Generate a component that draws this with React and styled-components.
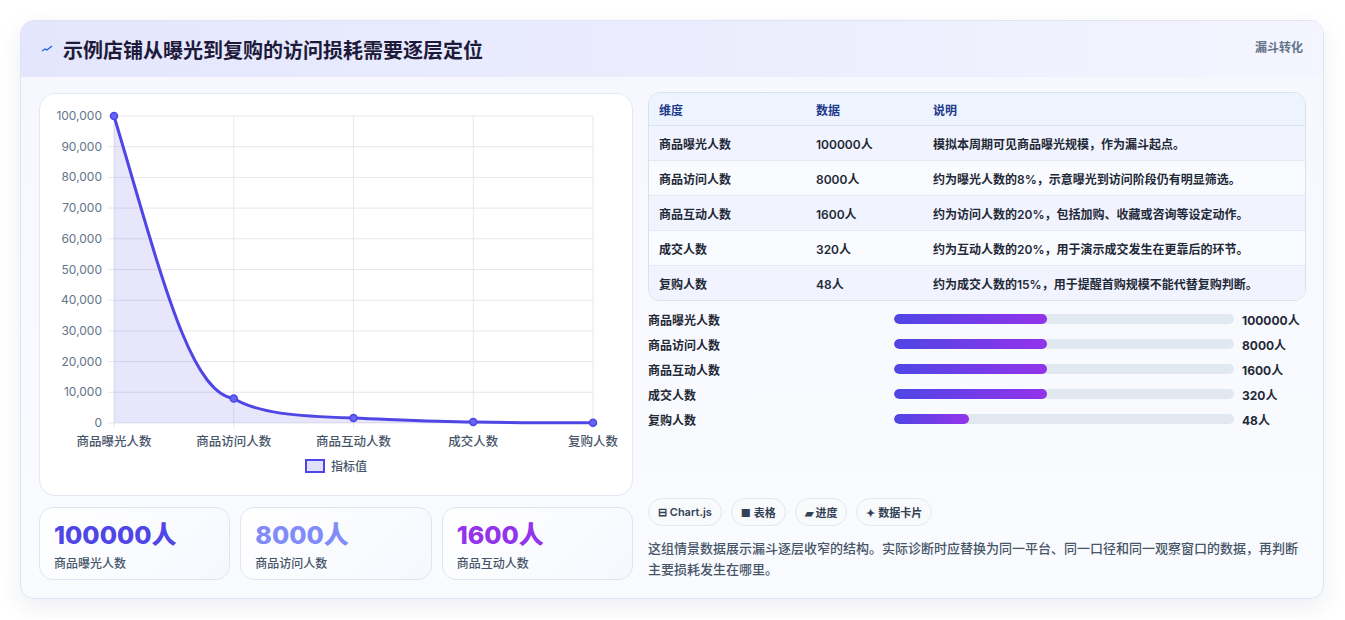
import React from "react";
import styled, { createGlobalStyle } from "styled-components";

const Global = createGlobalStyle`
  html, body { margin: 0; background: #fff; }
  body { font-family: Inter, "Noto Sans CJK SC", sans-serif; }
`;

const Page = styled.div`
  padding: 20px 21px 20px 20px;
`;
const Card = styled.div`
  width: 1304px;
  height: 579px;
  box-sizing: border-box;
  border: 1px solid #dfe3f5;
  border-radius: 14px;
  background: linear-gradient(180deg, #f7f8ff 0%, #fafbfe 100%);
  box-shadow: 0 8px 24px rgba(30, 41, 89, 0.08);
  overflow: hidden;
`;
const Header = styled.div`
  height: 56px;
  display: flex;
  align-items: center;
  justify-content: space-between;
  padding: 0 20px 0 20px;
  background: linear-gradient(90deg, #e4e6fd 0%, #eceefe 60%, #f5f5ff 100%);
`;
const Title = styled.h1`
  margin: 0;
  font-size: 20px;
  font-weight: 700;
  color: #1e1b3a;
  display: flex;
  align-items: center;
  gap: 10px;
`;
const Tag = styled.span`
  font-size: 12px;
  font-weight: 600;
  color: #64748b;
  align-self: flex-start;
  margin-top: 17px;
`;
const Body = styled.div`
  display: grid;
  grid-template-columns: 594px 658px;
  gap: 15px;
  padding: 16px 18px 0 18px;
`;
const Col = styled.div`
  display: flex;
  flex-direction: column;
`;
const ChartCard = styled.div`
  height: 403px;
  box-sizing: border-box;
  background: #fff;
  border: 1px solid #e3e8f2;
  border-radius: 16px;
`;
const Kpis = styled.div`
  display: grid;
  grid-template-columns: repeat(3, 1fr);
  gap: 10px;
  margin-top: 11px;
`;
const Kpi = styled.div`
  height: 73px;
  box-sizing: border-box;
  border: 1px solid #dde6f3;
  border-radius: 14px;
  background: linear-gradient(135deg, #fff 0%, #f6f8fe 100%);
  padding: 10px 14px;
`;
const KpiVal = styled.div`
  font-size: 25px;
  font-weight: 800;
  color: ${p => p.c};
  line-height: 34px;
`;
const KpiLabel = styled.div`
  font-size: 12px;
  color: #475569;
  font-weight: 500;
  margin-top: 2px;
`;
const Table = styled.table`
  width: 100%;
  border-collapse: separate;
  border-spacing: 0;
  border: 1px solid #d9e1ee;
  border-radius: 12px;
  overflow: hidden;
  font-size: 12px;
  font-weight: 600;
  color: #1f2937;
`;
const Th = styled.th`
  text-align: left;
  height: 32px;
  padding: 0 10px;
  background: #eef4ff;
  color: #1e3a8a;
  border-bottom: 1px solid #d9e1ee;
  width: ${p => p.w || "auto"};
`;
const Td = styled.td`
  height: 34px;
  padding: 0 10px;
  background: ${p => (p.alt ? "#f9fbff" : "#f1f4fe")};
  border-bottom: ${p => (p.last ? "none" : "1px solid #e3e8f2")};
`;
const Bars = styled.div`
  display: flex;
  flex-direction: column;
  gap: 7px;
  margin-top: 9px;
`;
const BarRow = styled.div`
  display: grid;
  grid-template-columns: 246px 340px 1fr;
  align-items: center;
  height: 18px;
  font-size: 12px;
  font-weight: 600;
  color: #1f2937;
`;
const Track = styled.div`
  height: 10px;
  border-radius: 5px;
  background: #e2e8f0;
  overflow: hidden;
`;
const Fill = styled.div`
  height: 100%;
  border-radius: 5px;
  background: linear-gradient(90deg, #4f46e5, #9333ea);
`;
const Val = styled.span`
  padding-left: 8px;
  font-weight: 700;
`;
const Chips = styled.div`
  display: flex;
  gap: 9px;
  margin-top: auto;
`;
const Chip = styled.span`
  height: 28px;
  box-sizing: border-box;
  padding: 0 9px;
  border: 1px solid #e2e8f0;
  border-radius: 14px;
  background: #f8fafc;
  display: flex;
  align-items: center;
  gap: 3px;
  font-size: 11px;
  font-weight: 600;
  color: #334155;
`;
const Para = styled.p`
  margin: 12px 0 0;
  font-size: 13px;
  line-height: 21px;
  font-weight: 500;
  color: #475569;
`;
const RightCol = styled(Col)`
  height: 488px;
  margin-top: -1px;
`;

const rows = [
  ["商品曝光人数", "100000人", "模拟本周期可见商品曝光规模，作为漏斗起点。", 45],
  ["商品访问人数", "8000人", "约为曝光人数的8%，示意曝光到访问阶段仍有明显筛选。", 45],
  ["商品互动人数", "1600人", "约为访问人数的20%，包括加购、收藏或咨询等设定动作。", 45],
  ["成交人数", "320人", "约为互动人数的20%，用于演示成交发生在更靠后的环节。", 45],
  ["复购人数", "48人", "约为成交人数的15%，用于提醒首购规模不能代替复购判断。", 22],
];

function Chart() {
  const L = 74, T = 22, W = 479, H = 307;
  const xs = [0, 1, 2, 3, 4].map(i => L + i * W / 4);
  const vals = [100000, 8000, 1600, 320, 48];
  const ys = vals.map(v => T + H - (v / 100000) * H);
  const ticks = [100000, 90000, 80000, 70000, 60000, 50000, 40000, 30000, 20000, 10000, 0];
  const labels = ["商品曝光人数", "商品访问人数", "商品互动人数", "成交人数", "复购人数"];
  const line = `M${xs[0]},${ys[0]} C${xs[0] + 45},${ys[0] + 150} ${xs[1] - 45},${ys[1] - 5} ${xs[1]},${ys[1]} C${xs[1] + 25},${ys[1] + 15} ${xs[2] - 60},${ys[2] - 2} ${xs[2]},${ys[2]} C${xs[2] + 50},${ys[2] + 2} ${xs[3] - 40},${ys[3]} ${xs[3]},${ys[3]} C${xs[3] + 50},${ys[3] + 1} ${xs[4] - 40},${ys[4]} ${xs[4]},${ys[4]}`;
  const f = { fontFamily: "Inter, 'Noto Sans CJK SC', sans-serif" };
  return (
    <svg width="592" height="401" style={{ display: "block" }}>
      {ticks.map((t, i) => {
        const y = T + (i * H) / 10;
        return (
          <g key={t}>
            <line x1={L - 6} x2={L + W} y1={y} y2={y} stroke="#e5e7eb" />
            <text x={L - 12} y={y + 4} textAnchor="end" fontSize="12" fill="#64748b" style={f}>{t.toLocaleString("en-US")}</text>
          </g>
        );
      })}
      {xs.map((x, i) => (
        <g key={i}>
          <line x1={x} x2={x} y1={T} y2={T + H + 5} stroke="#e5e7eb" />
          <text x={x} y={T + H + 23} textAnchor="middle" fontSize="12.5" fontWeight="500" fill="#475569" style={f}>{labels[i]}</text>
        </g>
      ))}
      <path d={`${line} L${xs[4]},${T + H} L${xs[0]},${T + H} Z`} fill="rgba(99,86,230,0.15)" />
      <path d={line} fill="none" stroke="#4f46e5" strokeWidth="3" />
      {xs.map((x, i) => (
        <circle key={i} cx={x} cy={ys[i]} r="3.5" fill="#6366f1" stroke="#4f46e5" strokeWidth="1.5" />
      ))}
      <rect x="266" y="366" width="18" height="12" fill="#e0e0fb" stroke="#4f46e5" strokeWidth="2" />
      <text x="291" y="377" fontSize="12" fontWeight="500" fill="#475569" style={f}>指标值</text>
    </svg>
  );
}

export default function App() {
  return (
    <Page>
      <Global />
      <Card>
        <Header>
          <Title>
            <svg width="12" height="10" viewBox="0 0 12 10"><path d="M1 7 L4 5 L6 6 L11 2" stroke="#2563eb" strokeWidth="1.4" fill="none" /></svg>
            示例店铺从曝光到复购的访问损耗需要逐层定位
          </Title>
          <Tag>漏斗转化</Tag>
        </Header>
        <Body>
          <Col>
            <ChartCard><Chart /></ChartCard>
            <Kpis>
              <Kpi><KpiVal c="#4f46e5">100000人</KpiVal><KpiLabel>商品曝光人数</KpiLabel></Kpi>
              <Kpi><KpiVal c="#818cf8">8000人</KpiVal><KpiLabel>商品访问人数</KpiLabel></Kpi>
              <Kpi><KpiVal c="#9333ea">1600人</KpiVal><KpiLabel>商品互动人数</KpiLabel></Kpi>
            </Kpis>
          </Col>
          <RightCol>
            <Table>
              <thead>
                <tr><Th w="137px">维度</Th><Th w="97px">数据</Th><Th>说明</Th></tr>
              </thead>
              <tbody>
                {rows.map((r, i) => (
                  <tr key={r[0]}>
                    <Td alt={i % 2 === 1} last={i === 4}>{r[0]}</Td>
                    <Td alt={i % 2 === 1} last={i === 4}>{r[1]}</Td>
                    <Td alt={i % 2 === 1} last={i === 4}>{r[2]}</Td>
                  </tr>
                ))}
              </tbody>
            </Table>
            <Bars>
              {rows.map(r => (
                <BarRow key={r[0]}>
                  <span>{r[0]}</span>
                  <Track><Fill style={{ width: `${r[3]}%` }} /></Track>
                  <Val>{r[1]}</Val>
                </BarRow>
              ))}
            </Bars>
            <Chips>
              <Chip>⊟ Chart.js</Chip>
              <Chip>■ 表格</Chip>
              <Chip>▰ 进度</Chip>
              <Chip>✦ 数据卡片</Chip>
            </Chips>
            <Para>这组情景数据展示漏斗逐层收窄的结构。实际诊断时应替换为同一平台、同一口径和同一观察窗口的数据，再判断主要损耗发生在哪里。</Para>
          </RightCol>
        </Body>
      </Card>
    </Page>
  );
}
